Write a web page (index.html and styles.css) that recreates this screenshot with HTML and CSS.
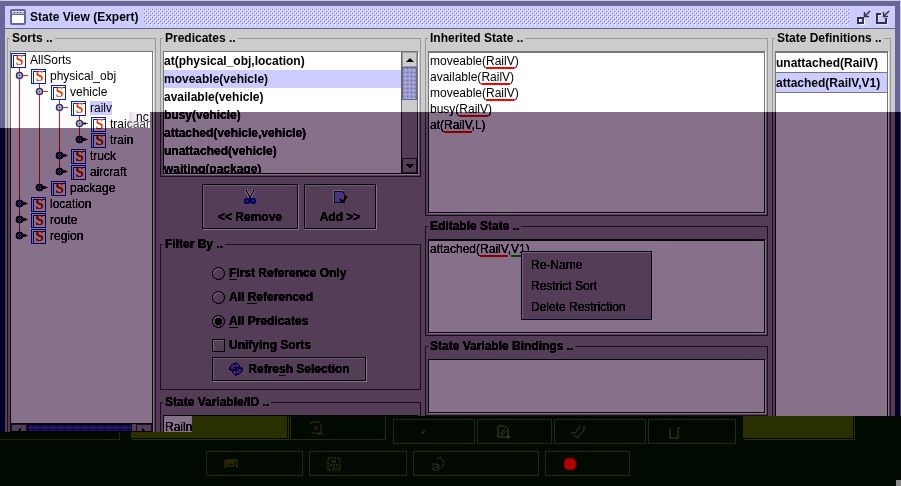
FILE: index.html
```html
<!DOCTYPE html>
<html lang="en">
<head>
<meta charset="utf-8">
<title>State View (Expert)</title>
<link rel="stylesheet" href="styles.css">
</head>
<body>
<svg class="defs" aria-hidden="true">
  <symbol id="handle" viewBox="0 0 14 9">
    <path d="M8 4.500h5" stroke="#ff2020" stroke-width="1"/>
    <circle cx="4.500" cy="4.500" r="3" fill="#ccccff" stroke="#333355" stroke-width="1.500"/>
    <circle cx="4.500" cy="4.500" r="1" fill="#444466"/>
  </symbol>
  <symbol id="closed" viewBox="0 0 14 9">
    <path d="M8 4.500h5" stroke="#ff2020"/>
    <path d="M7 4.500h4" stroke="#111" stroke-width="2"/>
    <circle cx="4.500" cy="4.500" r="3" fill="#ccccff" stroke="#333355" stroke-width="1.500"/>
    <circle cx="4.500" cy="4.500" r="1" fill="#444466"/>
  </symbol>
</svg>
<div class="window">
  <header class="titlebar">
    <svg class="win-icon" viewBox="0 0 16 16"><rect x="1" y="1" width="14" height="14" rx="1" fill="#fff" stroke="#666699" stroke-width="2"/><path d="M2 4h12" stroke="#b8b8e8" stroke-width="3"/><path d="M2 5.500h12" stroke="#666699"/><path d="M4 3.500h1m2 0h1m2 0h1" stroke="#333"/></svg>
    <h1>State View (Expert)</h1>
    <div class="bumps"></div>
    <button class="win-btn" aria-label="Minimize"><svg viewBox="0 0 15 15"><path d="M2.500 8.500h5v5h-5z" fill="none" stroke="#fff" transform="translate(1 1)"/><path d="M2 8h5v5H2z" fill="none" stroke="#33334d" stroke-width="2"/><path d="M14 1L9 6M8.500 2v4.500H13" fill="none" stroke="#33334d" stroke-width="1.500"/></svg></button>
    <button class="win-btn" aria-label="Restore"><svg viewBox="0 0 15 15"><path d="M7 4H2v9h9V9" fill="none" stroke="#fff" transform="translate(1 1)"/><path d="M6 4H2v9h9V8" fill="none" stroke="#33334d" stroke-width="2"/><path d="M14 1L9 6M8.500 2v4.500H13" fill="none" stroke="#33334d" stroke-width="1.500"/></svg></button>
  </header>

  <main class="panes">
    <fieldset class="group open">
      <legend>Sorts ..</legend>
      <div class="well tree-well">
        <ul class="tree">
          <li><div class="node"><i class="sort">S</i><span>AllSorts</span></div>
            <ul>
              <li><div class="node"><svg class="knob"><use href="#handle"/></svg><i class="sort">S</i><span>physical_obj</span></div>
                <ul>
                  <li><div class="node"><svg class="knob"><use href="#handle"/></svg><i class="sort">S</i><span>vehicle</span></div>
                    <ul>
                      <li><div class="node"><svg class="knob"><use href="#handle"/></svg><i class="sort">S</i><span class="picked">railv</span></div>
                        <ul>
                          <li><div class="node"><svg class="knob"><use href="#closed"/></svg><i class="sort">S</i><span>traicaar</span></div></li>
                          <li><div class="node"><svg class="knob"><use href="#closed"/></svg><i class="sort">S</i><span>train</span></div></li>
                        </ul>
                      </li>
                      <li><div class="node"><svg class="knob"><use href="#closed"/></svg><i class="sort">S</i><span>truck</span></div></li>
                      <li><div class="node"><svg class="knob"><use href="#closed"/></svg><i class="sort">S</i><span>aircraft</span></div></li>
                    </ul>
                  </li>
                  <li><div class="node"><svg class="knob"><use href="#closed"/></svg><i class="sort">S</i><span>package</span></div></li>
                </ul>
              </li>
              <li><div class="node"><svg class="knob"><use href="#closed"/></svg><i class="sort">S</i><span>location</span></div></li>
              <li><div class="node"><svg class="knob"><use href="#closed"/></svg><i class="sort">S</i><span>route</span></div></li>
              <li><div class="node"><svg class="knob"><use href="#closed"/></svg><i class="sort">S</i><span>region</span></div></li>
            </ul>
          </li>
        </ul>
        <div class="hscroll"><b class="arrow left"></b><div class="thumb"></div><b class="arrow right"></b></div>
        <span class="smear">nc</span>
      </div>
    </fieldset>

    <div class="middle">
      <fieldset class="group predicates">
        <legend>Predicates ..</legend>
        <div class="well list-well">
          <ul class="list">
            <li>at(physical_obj,location)</li>
            <li class="picked">moveable(vehicle)</li>
            <li>available(vehicle)</li>
            <li>busy(vehicle)</li>
            <li>attached(vehicle,vehicle)</li>
            <li>unattached(vehicle)</li>
            <li>waiting(package)</li>
          </ul>
          <div class="vscroll"><b class="arrow up"></b><div class="thumb"></div><b class="arrow downward"></b></div>
        </div>
      </fieldset>
      <div class="actions">
        <button class="push tall remove"><svg viewBox="0 0 16 16"><path d="M4 1l5 9M12 1L7 10" stroke="#fff" stroke-width="3"/><path d="M4 1l5 9M12 1L7 10" stroke="#555" stroke-width="1"/><circle cx="5" cy="12" r="2" fill="none" stroke="#5555e0" stroke-width="2"/><circle cx="11" cy="12" r="2" fill="none" stroke="#5555e0" stroke-width="2"/></svg>&lt;&lt; Remove</button>
        <button class="push tall add"><svg viewBox="0 0 16 16"><path d="M2.500 2.500h8l2 3v8h-10z" fill="#c4c4f4" stroke="#666688"/><path d="M1.500 14V1.500H11" fill="none" stroke="#f4f4f4"/><path d="M8 10l3 3 4-6" fill="none" stroke="#444" stroke-width="1.500"/></svg>Add &gt;&gt;</button>
      </div>
      <fieldset class="group filter">
        <legend>Filter By ..</legend>
        <div class="options">
          <label><input type="radio" name="filter"><span><u>F</u>irst Reference Only</span></label>
          <label><input type="radio" name="filter"><span>All <u>R</u>eferenced</span></label>
          <label><input type="radio" name="filter" checked><span><u>A</u>ll Predicates</span></label>
          <label><input type="checkbox"><span>Unifying Sorts</span></label>
          <button class="push refresh"><svg viewBox="0 0 16 16"><path d="M2 9a5 5 0 0 1 6-6V1l4 4-4 3V6a3 3 0 0 0-3 3z" fill="#b4b4f4" stroke="#555588"/><path d="M14 7a5 5 0 0 1-6 6v2l-4-4 4-3v2a3 3 0 0 0 3-3z" fill="#b4b4f4" stroke="#555588"/></svg><span>Refre<u>s</u>h Selection</span></button>
        </div>
      </fieldset>
      <fieldset class="group open variable">
        <legend>State Variable/ID ..</legend>
        <div class="fields"><input type="text" value="Railn" aria-label="State variable"><input type="text" aria-label="ID"></div>
      </fieldset>
    </div>

    <div class="states">
      <fieldset class="group">
        <legend>Inherited State ..</legend>
        <div class="well text">
          <p>moveable(<u>RailV</u>)</p>
          <p>available(<u>RailV</u>)</p>
          <p>moveable(<u>RailV</u>)</p>
          <p>busy(<u>RailV</u>)</p>
          <p>at(<u>RailV</u>,L)</p>
        </div>
      </fieldset>
      <fieldset class="group">
        <legend>Editable State ..</legend>
        <div class="well text editor">
          <p>attached(<u>RailV</u>,<u class="free">V1</u>)</p>
          <div class="menu"><button>Re-Name</button><button>Restrict Sort</button><button>Delete Restriction</button></div>
        </div>
      </fieldset>
      <fieldset class="group">
        <legend>State Variable Bindings ..</legend>
        <textarea class="well" aria-label="State Variable Bindings"></textarea>
      </fieldset>
    </div>

    <fieldset class="group open">
      <legend>State Definitions ..</legend>
      <div class="well">
        <ul class="list boxed">
          <li>unattached(RailV)</li>
          <li class="picked">attached(RailV,V1)</li>
        </ul>
      </div>
    </fieldset>
  </main>

  <footer class="dock">
    <div class="row upper">
      <div class="stub"></div>
      <div class="slot first"></div>
      <button class="dim flush" aria-label="Find"><svg viewBox="0 0 16 16"><path d="M3 4V2h8l2 3v8H4v-3M10 14h5" stroke-dasharray="2 1"/><circle cx="8" cy="8" r="2" fill="#083808" stroke="#400"/></svg></button>
      <button class="dim line" aria-label="New"><svg viewBox="0 0 16 16"><path d="M10 9h3V6"/></svg></button>
      <button class="dim page" aria-label="Insert"><svg viewBox="0 0 16 16"><path d="M2 2h7l3 3v8H2zM4 10l5-5M5 12l5-5M10 13h5M12 10v5"/></svg></button>
      <button class="dim pen" aria-label="Edit"><svg viewBox="0 0 16 16"><path d="M1 9h4M5 9l5-7M14 2v4l-5 6-2 2-3-3"/></svg></button>
      <button class="dim bin" aria-label="Delete"><svg viewBox="0 0 16 16"><path d="M4 4v10h8V4h2"/></svg></button>
      <div class="slot second"></div>
    </div>
    <div class="row lower">
      <button class="dim a" aria-label="Open"><svg viewBox="0 0 16 16"><path d="M2 12V4h12v8M4 6h7v4H4zM6 5v3M9 5v3" stroke="#4a3a00"/></svg></button>
      <button class="dim b" aria-label="Verify"><svg viewBox="0 0 16 16"><path d="M2 2h12v12H2zM5 5h6M8 5v8M5 8v4M11 8v4" stroke-dasharray="2 1"/></svg></button>
      <button class="dim c" aria-label="Update"><svg viewBox="0 0 16 16"><path d="M2 8h6v3H3v3h6V9M7 3l3-2 4 5-1 4-3 2" stroke-dasharray="2 1"/></svg></button>
      <button class="dim d" aria-label="Stop"><svg viewBox="0 0 16 16"><path d="M5 2h6l3 3v6l-3 3H5l-3-3V5z" fill="#b00000" stroke="#500"/></svg></button>
    </div>
    <i class="grip"></i>
  </footer>
  <div class="veil floor"></div>
  <div class="veil drop"></div>
</div>
</body>
</html>
```

FILE: styles.css
```css
* { box-sizing: border-box; }
body { margin: 0; background: #c8ccdc; font: bold 12px/16px "Liberation Sans", Arial, sans-serif; color: #000; }
.defs { position: absolute; width: 0; height: 0; }
ul, p, h1 { margin: 0; padding: 0; }
ul { list-style: none; }
button, input, textarea { font: inherit; color: inherit; }
button { padding: 0; }

.window { position: relative; isolation: isolate; display: flex; flex-direction: column; height: 100vh; min-height: 460px; padding: 1px 1px 0 0; overflow: hidden; background: #c8ccdc; }

.titlebar { display: flex; align-items: center; flex: none; height: 28px; gap: 4px; background: #ccccff; border: solid #666699; border-width: 5px 5px 1px; padding: 0 5px; }
.win-icon { width: 16px; height: 16px; }
.titlebar h1 { font: inherit; }
.bumps { flex: 1; height: 16px; margin: 0 3px 0 2px; background:
  conic-gradient(at 1px 1px, transparent 75%, #7777b0 0) 0 0 / 4px 4px,
  conic-gradient(at 1px 1px, transparent 75%, #7777b0 0) 2px 2px / 4px 4px,
  conic-gradient(at 1px 1px, transparent 75%, #ffffff 0) 3px 3px / 4px 4px,
  conic-gradient(at 1px 1px, transparent 75%, #ffffff 0) 1px 1px / 4px 4px; }
.win-btn { width: 15px; height: 15px; border: 0; background: none; }
.win-btn svg { display: block; width: 15px; height: 15px; }

.panes { flex: 1; min-height: 0; display: grid; grid-template-columns: 149fr 261fr 343fr 119fr; grid-template-rows: minmax(0, 1fr); gap: 4px; padding: 1px 4px 0 2px; border: 5px solid #666699; border-width: 0 5px; background: #ccc; overflow: hidden; }
.group { display: flex; flex-direction: column; min-width: 0; min-height: 0; margin: 0; padding: 5px 2px 2px; border: 1px solid #999; }
.group.open { border-bottom: 0; padding-bottom: 0; }
.group legend { height: 16px; line-height: 16px; margin: 0; padding: 0 2px; white-space: nowrap; }
.well { flex: 1; min-height: 0; min-width: 0; background: #fff; border: 1px solid #777; border-top-width: 2px; box-shadow: 1px 1px #fff; overflow: hidden; }
textarea.well { display: block; width: 100%; resize: none; outline: 0; border-width: 1px; }
.picked { background: #ccccff; }

.tree-well { position: relative; display: flex; flex-direction: column; border-top-width: 1px; }
.tree { flex: 1; font-weight: normal; }
.tree ul { position: relative; margin-left: 20px; }
.tree ul::before { content: ""; position: absolute; left: -12px; top: 0; bottom: 8px; width: 1px; background: #ff1010; }
.node { position: relative; display: flex; align-items: center; height: 16px; gap: 4px; white-space: nowrap; }
.node span { line-height: 14px; }
.sort { flex: none; width: 15px; height: 15px; border: 1px solid #0022dd; box-shadow: inset 1px 1px #fff, inset 2px 2px #0022dd; padding-left: 2px; background: #fff; color: #ee2200; text-align: center; font: 14px/14px "Liberation Serif", serif; text-shadow: 1px 0 #ffb060; }
.knob { position: absolute; left: -16px; top: 3px; width: 14px; height: 9px; }
.hscroll { flex: none; display: flex; height: 16px; margin-bottom: -8px; border-top: 1px solid #777; background: #ccc; }
.hscroll .thumb { flex: 1; margin-right: 4px; }
.thumb { border: 1px solid #666699; background:
  conic-gradient(at 1px 1px, transparent 75%, #666699 0) 0 0 / 4px 4px,
  conic-gradient(at 1px 1px, transparent 75%, #ccccff 0) 2px 2px / 4px 4px, #9999cc; }
.arrow { flex: none; display: grid; place-items: center; width: 16px; height: 15px; border: 1px solid #999; }
.arrow::after { content: ""; border: 4px solid transparent; }
.arrow.up::after { border-bottom-color: #000; border-top-width: 0; }
.arrow.downward::after { border-top-color: #000; border-bottom-width: 0; }
.arrow.left::after { border-right-color: #000; border-left-width: 0; }
.arrow.right::after { border-left-color: #000; border-right-width: 0; }
.smear { position: absolute; right: 0; top: 60px; width: 23px; height: 16px; padding-left: 7px; font-weight: normal; line-height: 10px; background: linear-gradient(90deg, #c8b8d080, #f0e0f440 40%, #e8d8f040); }

.middle { display: flex; flex-direction: column; min-width: 0; min-height: 0; }
.predicates { flex: none; height: 147px; }
.list-well { display: flex; border-top-width: 1px; }
.list { flex: 1; min-width: 0; }
.list li { height: 18px; line-height: 18px; white-space: nowrap; }
.list.boxed li { height: 20px; line-height: 20px; border-bottom: 1px solid #777; }
.vscroll { flex: none; display: flex; flex-direction: column; width: 16px; border-left: 1px solid #666; background: #ccc; }
.vscroll .thumb { height: 33px; margin-bottom: auto; }
.vscroll .arrow { width: 15px; }
.actions { flex: none; display: flex; justify-content: center; gap: 6px; padding: 7px 3px 7px 0; }
.push { border: 1px solid #777; box-shadow: inset 1px 1px #e8e8e8, 1px 1px #fff; background: #ccc; }
.push svg { width: 16px; height: 16px; }
.tall { display: flex; flex-direction: column; align-items: center; justify-content: center; gap: 4px; height: 45px; }
.remove { width: 96px; }
.add { width: 72px; }
.filter { flex: none; height: 154px; padding: 9px 2px 0; }
.options { display: flex; flex-direction: column; align-items: flex-start; padding-left: 49px; }
.options label { display: flex; align-items: center; gap: 4px; height: 24px; }
.options u, .refresh u { text-underline-offset: 2px; }
.options input { appearance: none; width: 13px; height: 13px; margin: 0; border: 1px solid #666; background: #ccc; box-shadow: inset 1px 1px #eee; }
.options input[type="radio"] { border-radius: 50%; }
.options input[type="radio"]:checked { background: radial-gradient(#222 3px, #ccc 4px); }
.refresh { display: flex; align-items: center; justify-content: center; gap: 4px; width: 154px; height: 24px; }
.variable { flex: 1; margin-top: 4px; }
.fields { display: grid; grid-template-columns: 160fr 96fr; }
.fields input { min-width: 0; height: 24px; padding: 0 1px; border: 1px solid #777; background: #fff; font-weight: normal; }

.states { display: grid; grid-template-rows: 186fr 118fr 78fr; grid-template-columns: minmax(0, 1fr); gap: 2px; min-height: 0; padding-bottom: 16px; }
.text { padding-left: 1px; font-weight: normal; }
.text u { text-decoration: underline 2px #ff0000; text-decoration-skip-ink: none; text-underline-offset: 2px; }
.text u.free { text-decoration-color: #00d000; }
.editor { position: relative; }
.menu { position: absolute; left: 92px; top: 10px; width: 131px; display: flex; flex-direction: column; padding: 2px; border: 1px solid #666699; background: #ccc; box-shadow: inset 1px 1px #eee; }
.menu button { height: 21px; padding: 0 7px; border: 0; background: none; text-align: left; }

/* lighten followed by difference subtracts one colour, clamped at black */
.veil { position: absolute; inset: 0; background: #798f75; pointer-events: none; clip-path: polygon(0 128px, 150px 128px, 150px 112px, 100% 112px, 100% 100%, 0 100%); }
.floor { mix-blend-mode: lighten; }
.drop { mix-blend-mode: difference; }

.dock { position: relative; z-index: 1; flex: none; height: 70px; margin: -16px -1px 0 0; background: #000a00; clip-path: polygon(0 16px, 192px 16px, 192px 0, 100% 0, 100% 100%, 0 100%); }
.row { display: flex; }
.upper { height: 35px; }
.stub { width: 120px; height: 24px; border-bottom: 1px solid #262c00; border-right: 1px solid #262c00; }
.slot { height: 23px; background: #2a3000; border: solid #000a00; border-width: 0 1px 1px 0; box-shadow: 1px 1px #2a3000; }
.slot.first { width: 157px; margin: 0 2px 0 11px; }
.slot.second { width: 111px; margin-left: 7px; }
.dim { height: 25px; border: 1px solid #262c00; background: none; text-align: left; }
.dim svg { display: block; width: 16px; height: 16px; fill: none; stroke: #3c4410; }
.upper .dim { margin: 3px 2px 0 0; }
.upper .dim.flush { width: 96px; height: 24px; margin: 0 7px 0 0; padding-left: 17px; border-top: 0; }
.line { width: 82px; padding-left: 17px; }
.page { width: 75px; padding-left: 18px; }
.pen { width: 92px; padding-left: 15px; }
.upper .bin { width: 88px; margin-right: 0; padding-left: 17px; }
.lower { gap: 6px; padding-left: 206px; }
.lower .dim { padding-left: 16px; }
.a { width: 97px; }
.b { width: 98px; }
.c { width: 126px; }
.d { width: 85px; }
.grip { position: absolute; right: 0; bottom: 0; width: 5px; height: 6px; background: #888; }
```
